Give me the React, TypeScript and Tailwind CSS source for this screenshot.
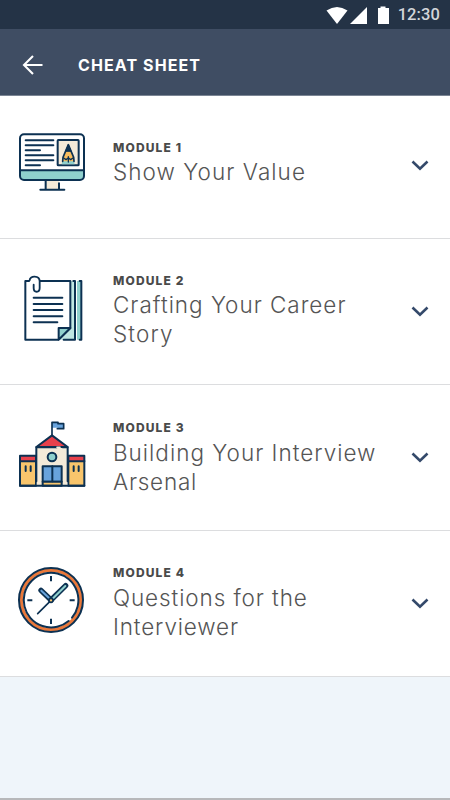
import React from 'react';

const NAVY = '#0c3152';

const MonitorIcon: React.FC = () => (
    <svg viewBox="0 0 270 255" className="w-[90px] h-[85px]" fill="none" stroke={NAVY} strokeWidth="6" strokeLinecap="round" strokeLinejoin="round">
        <path d="M107 180h40v28h-40z" fill="#f3ead9" stroke="none" />
        <path d="M30 151h192v19a10 10 0 0 1-10 10H40a10 10 0 0 1-10-10z" fill="#8fd0cd" stroke="none" />
        <rect x="30" y="43" width="192" height="137" rx="12" />
        <path d="M31 151h190" />
        <path d="M47 61h83M47 76h83M47 91h43M47 106h83M47 121h83M47 136h43" />
        <rect x="143" y="60" width="63" height="76" rx="2" fill="#f3ead9" />
        <path d="M155 133l2-13q6-5 10 0q5-4 10 0q6-4 14 0l3 13z" fill="#8fd0cd" stroke="none" />
        <path d="M158 124l1-12L175 74l16 38 1 12" fill="#f8bd5f" strokeWidth="5" />
        <path d="M167 93l8-19 8 19z" fill={NAVY} strokeWidth="3" />
        <path d="M161 114l7 5 7-6 7 6 7-5M175 110v16" strokeWidth="4" />
        <path d="M107 181v27M147 190v18M91 209h72" />
    </svg>
);

const PapersIcon: React.FC = () => (
    <svg viewBox="0 0 270 255" className="w-[90px] h-[85px]" fill="none" stroke={NAVY} strokeWidth="6" strokeLinecap="round" strokeLinejoin="round">
        <path d="M183 48h12v176h-47l35-35z" fill="#bfe6e2" stroke="none" />
        <path d="M201 48h12v176h-12z" fill="#8fd0cd" stroke="none" />
        <path d="M57 48H46v176h100l35-35V48H91" />
        <path d="M146 224v-35h35z" fill="#8fd0cd" />
        <path d="M190 48h5v176h-34M209 48h5v176h-5" />
        <path d="M71 98h86M71 117h86M71 135h86M71 154h86M71 172h71" />
        <path d="M59 46c0-15 30-15 30 3v20c0 15-18 15-18 0V59" strokeWidth="5.5" />
    </svg>
);

const SchoolIcon: React.FC = () => (
    <svg viewBox="0 0 270 255" className="w-[90px] h-[85px]" fill="none" stroke={NAVY} strokeWidth="6" strokeLinecap="round" strokeLinejoin="round">
        <path d="M30 147h48v74H30zM175 147h48v74h-48z" fill="#f8c56c" />
        <path d="M30 131h48v17H30zM175 131h48v17h-48z" fill="#e8414c" />
        <path d="M80 106h92v114H80z" fill="#f3ead9" stroke="none" />
        <path d="M79 208v-102h62M158 106h15v102" />
        <path d="M79 105l47-35 47 35z" fill="#e8414c" />
        <path d="M141 106h9" stroke="#f3ead9" strokeWidth="5" />
        <circle cx="126" cy="135" r="13" fill="#8fd0cd" />
        <path d="M98 163h57v46H98z" fill="#68a3dc" />
        <path d="M98 209h57v12H98z" fill="#f8c56c" />
        <path d="M127 163v45M30 221h193" />
        <path d="M47 163v14M62 163v14M191 163v14M206 163v14" />
        <path d="M126 31h18v5h17v15h-17v-4h-18z" fill="#68a3dc" stroke="none" />
        <path d="M126 70V31h18v4h17v15h-19" strokeWidth="5" />
    </svg>
);

const ClockIcon: React.FC = () => (
    <svg viewBox="0 0 270 255" className="w-[90px] h-[85px]" fill="none" stroke={NAVY} strokeWidth="6" strokeLinecap="round" strokeLinejoin="round">
        <circle cx="123" cy="126" r="90" stroke="#e9783a" strokeWidth="12" />
        <circle cx="123" cy="126" r="96" />
        <path d="M176 189A82 82 0 1 1 186 179" />
        <path d="M123 54v16M123 182v16M52 127h15M179 127h15" strokeLinecap="butt" />
        <path d="M123 127l-40 40" strokeWidth="5" />
        <path d="M123 126L93 97" strokeWidth="16" />
        <path d="M118 121L94 98" stroke="#68a3dc" strokeWidth="6" />
        <path d="M123 126l44-43" strokeWidth="16" />
        <path d="M130 120l36-36" stroke="#8fd0cd" strokeWidth="6" />
        <circle cx="123" cy="127" r="6" fill="#f8c56c" strokeWidth="5" />
    </svg>
);

const MODULES = [
    {
        label: 'Module 1',
        lines: [{ text: 'Show Your Value', spacing: 'tracking-[1.05px]' }],
        icon: <MonitorIcon />,
        row: 'h-[143px]',
        iconPad: 'pt-6',
        textPad: 'pt-[44px]',
        titlePad: 'pt-px',
        chevronPad: 'pt-[64px]',
    },
    {
        label: 'Module 2',
        lines: [
            { text: 'Crafting Your Career', spacing: 'tracking-[0.97px]' },
            { text: 'Story', spacing: 'tracking-[1.15px]' },
        ],
        icon: <PapersIcon />,
        row: 'h-[146px]',
        iconPad: 'pt-[26px]',
        textPad: 'pt-[34px]',
        titlePad: 'pt-px',
        chevronPad: 'pt-[67px]',
    },
    {
        label: 'Module 3',
        lines: [
            { text: 'Building Your Interview', spacing: 'tracking-[1px]' },
            { text: 'Arsenal', spacing: 'tracking-[0.75px]' },
        ],
        icon: <SchoolIcon />,
        row: 'h-[146px]',
        iconPad: 'pt-[27px]',
        textPad: 'pt-[35px]',
        titlePad: 'pt-0.5',
        chevronPad: 'pt-[67px]',
    },
    {
        label: 'Module 4',
        lines: [
            { text: 'Questions for the', spacing: 'tracking-[0.9px]' },
            { text: 'Interviewer', spacing: 'tracking-[0.85px]' },
        ],
        icon: <ClockIcon />,
        row: 'h-[146px]',
        iconPad: 'pt-[27px]',
        textPad: 'pt-[34px]',
        titlePad: 'pt-0.5',
        chevronPad: 'pt-[67px]',
    },
];

const App: React.FC = () => {
    return (
        <div className="w-full h-screen flex flex-col bg-[#eff5fa] border-b-2 border-[#b7b8ba] overflow-hidden font-['Inter',sans-serif]">
            <div className="h-[29px] shrink-0 bg-[#243346] flex items-center justify-end pr-[10px] text-white">
                <svg viewBox="0 0 66 18" className="w-[66px] h-[18px] mr-[7px]" fill="currentColor">
                    <path d="M1.500 4.600Q12 -2.400 22.500 4.600L12 18z" />
                    <path d="M42 1v17H25z" />
                    <path d="M53 2h2.500V0.500h5V2H64v16H53z" />
                </svg>
                <span className="font-['Roboto',sans-serif] font-medium text-[16.5px] leading-[29px] tracking-[0.1px] text-[#d3d6da]">12:30</span>
            </div>

            <header className="h-[67px] shrink-0 bg-[#3f4d63] border-b border-[#7b8594] flex items-center pl-[22px] pt-[5px] text-white">
                <svg viewBox="0 0 22 20" className="w-[22px] h-5" fill="none" stroke="currentColor" strokeWidth="2.1">
                    <path d="M20.500 10H2.500M11 1L2 10l9 9" />
                </svg>
                <h1 className="ml-[34px] text-[16px] font-bold uppercase tracking-[1.1px]">Cheat Sheet</h1>
            </header>

            {MODULES.map((module) => (
                <section key={module.label} className={`${module.row} shrink-0 flex items-start bg-white border-b border-[#dcdddf]`}>
                    <div className={`${module.iconPad} pl-[10px] shrink-0`}>{module.icon}</div>
                    <div className={`${module.textPad} pl-[13px] flex-1`}>
                        <div className="text-[12px] leading-4 font-extrabold uppercase tracking-[1.15px] text-[#4a4a4a]">{module.label}</div>
                        <h2 className={`${module.titlePad} text-[22.5px] leading-[29px] font-light text-[#555555] whitespace-nowrap`}>
                            {module.lines.map((line) => (
                                <span key={line.text} className={`block ${line.spacing}`}>{line.text}</span>
                            ))}
                        </h2>
                    </div>
                    <div className={`${module.chevronPad} pr-[21px]`}>
                        <svg viewBox="0 0 18 11" className="w-[18px] h-[11px]" fill="none" stroke="#34496a" strokeWidth="2.600">
                            <path d="M1.500 1.500L9 8.700l7.500-7.200" />
                        </svg>
                    </div>
                </section>
            ))}
        </div>
    );
};

export default App;
